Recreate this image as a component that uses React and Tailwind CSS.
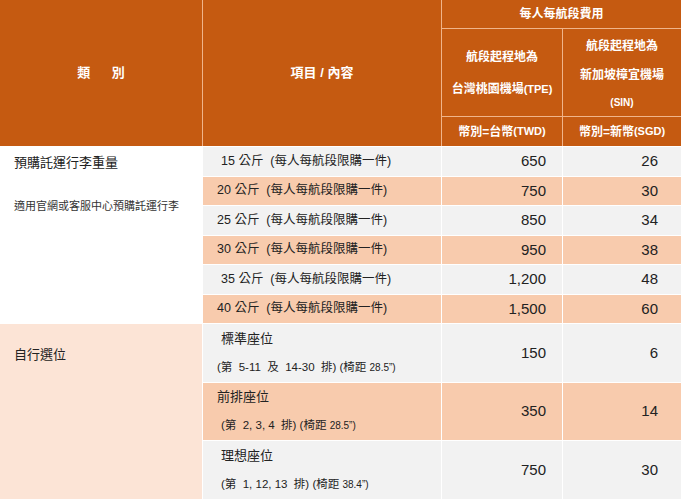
import React from "react";

const font = { fontFamily: "'Liberation Sans','Noto Sans CJK TC',sans-serif" };

const rows = [
  { w: "15", bg: "bg-[#F2F2F2]", pad: "pl-[18px]", twd: "650", sgd: "26" },
  { w: "20", bg: "bg-[#F8CBAD]", pad: "pl-[14px]", twd: "750", sgd: "30" },
  { w: "25", bg: "bg-[#F2F2F2]", pad: "pl-[14px]", twd: "850", sgd: "34" },
  { w: "30", bg: "bg-[#F8CBAD]", pad: "pl-[14px]", twd: "950", sgd: "38" },
  { w: "35", bg: "bg-[#F2F2F2]", pad: "pl-[18px]", twd: "1,200", sgd: "48" },
  { w: "40", bg: "bg-[#F8CBAD]", pad: "pl-[14px]", twd: "1,500", sgd: "60" },
];

const seats = [
  { t: "標準座位", tp: "pl-[18px]", s: "(第  5-11  及  14-30  排) (椅距 ", sp: "pl-[14px]", pitch: "28.5”)", bg: "bg-[#F2F2F2]", twd: "150", sgd: "6" },
  { t: "前排座位", tp: "pl-[14px]", s: "(第  2, 3, 4  排) (椅距 ", sp: "pl-[18px]", pitch: "28.5”)", bg: "bg-[#F8CBAD]", twd: "350", sgd: "14" },
  { t: "理想座位", tp: "pl-[18px]", s: "(第  1, 12, 13  排) (椅距 ", sp: "pl-[18px]", pitch: "38.4”)", bg: "bg-[#F2F2F2]", twd: "750", sgd: "30" },
];

const H = "bg-[#C55A11] text-white font-bold border-[#F0B48A] flex items-center justify-center text-center";
const num = "text-[15px] text-[#222] flex items-center justify-end";

export default function App() {
  return (
    <div style={font} className="w-[681px] h-[500px] overflow-hidden bg-white">
      <div className="grid grid-cols-[203px_239px_121px_118px] grid-rows-[29px_88px_29px_29.5px_29.5px_29.5px_29.5px_29.5px_29.5px_59px_58px_59px]">
        <div className={`${H} row-span-3 border-r text-[13px] whitespace-pre`}>{"類      別"}</div>
        <div className={`${H} row-span-3 border-r text-[13px] whitespace-pre`}>{"項目 / 內容"}</div>
        <div className={`${H} col-span-2 border-b text-[12px]`}>每人每航段費用</div>
        <div className={`${H} border-r border-b text-[12px] leading-[32px] flex-col`}>
          <span>航段起程地為</span>
          <span>台灣桃園機場<span className="text-[11px]">(TPE)</span></span>
        </div>
        <div className={`${H} border-b text-[12px] leading-[29px] flex-col pt-[2px]`}>
          <span>航段起程地為</span>
          <span>新加坡樟宜機場</span>
          <span className="text-[10px] leading-[26px]">(SIN)</span>
        </div>
        <div className={`${H} border-r text-[12px]`}>幣別=台幣<span className="text-[11px]">(TWD)</span></div>
        <div className={`${H} text-[12px]`}>幣別=新幣<span className="text-[11px]">(SGD)</span></div>

        <div className="row-span-6 bg-white border-t border-r border-white pl-[14px] pt-[7px] text-[#222]">
          <div className="text-[13px] leading-[18px]">預購託運行李重量</div>
          <div className="text-[11px] leading-[14px] mt-[27px] text-[#333]">適用官網或客服中心預購託運行李</div>
        </div>
        {rows.map((r, i) => (
          <React.Fragment key={i}>
            <div className={`${r.bg} ${r.pad} border-r border-t border-white flex items-center text-[12.5px] text-[#222] whitespace-pre`}>
              {`${r.w} 公斤  (每人每航段限購一件)`}
            </div>
            <div className={`${r.bg} ${num} border-r border-t border-white pr-[16px]`}>{r.twd}</div>
            <div className={`${r.bg} ${num} border-t border-white pr-[23px]`}>{r.sgd}</div>
          </React.Fragment>
        ))}

        <div className="row-span-3 bg-[#FCE4D6] border-t border-r border-white pl-[14px] pt-[21px] text-[13px] text-[#222]">
          自行選位
        </div>
        {seats.map((s, i) => (
          <React.Fragment key={i}>
            <div className={`${s.bg} border-r border-t border-white flex flex-col justify-center text-[#222]`}>
              <div className={`${s.tp} text-[13px] leading-[28px]`}>{s.t}</div>
              <div className={`${s.sp} text-[11.5px] leading-[28px] whitespace-pre`}>
                {s.s}<span className="text-[10px]">{s.pitch}</span>
              </div>
            </div>
            <div className={`${s.bg} ${num} border-r border-t border-white pr-[16px]`}>{s.twd}</div>
            <div className={`${s.bg} ${num} border-t border-white pr-[23px]`}>{s.sgd}</div>
          </React.Fragment>
        ))}
      </div>
    </div>
  );
}
